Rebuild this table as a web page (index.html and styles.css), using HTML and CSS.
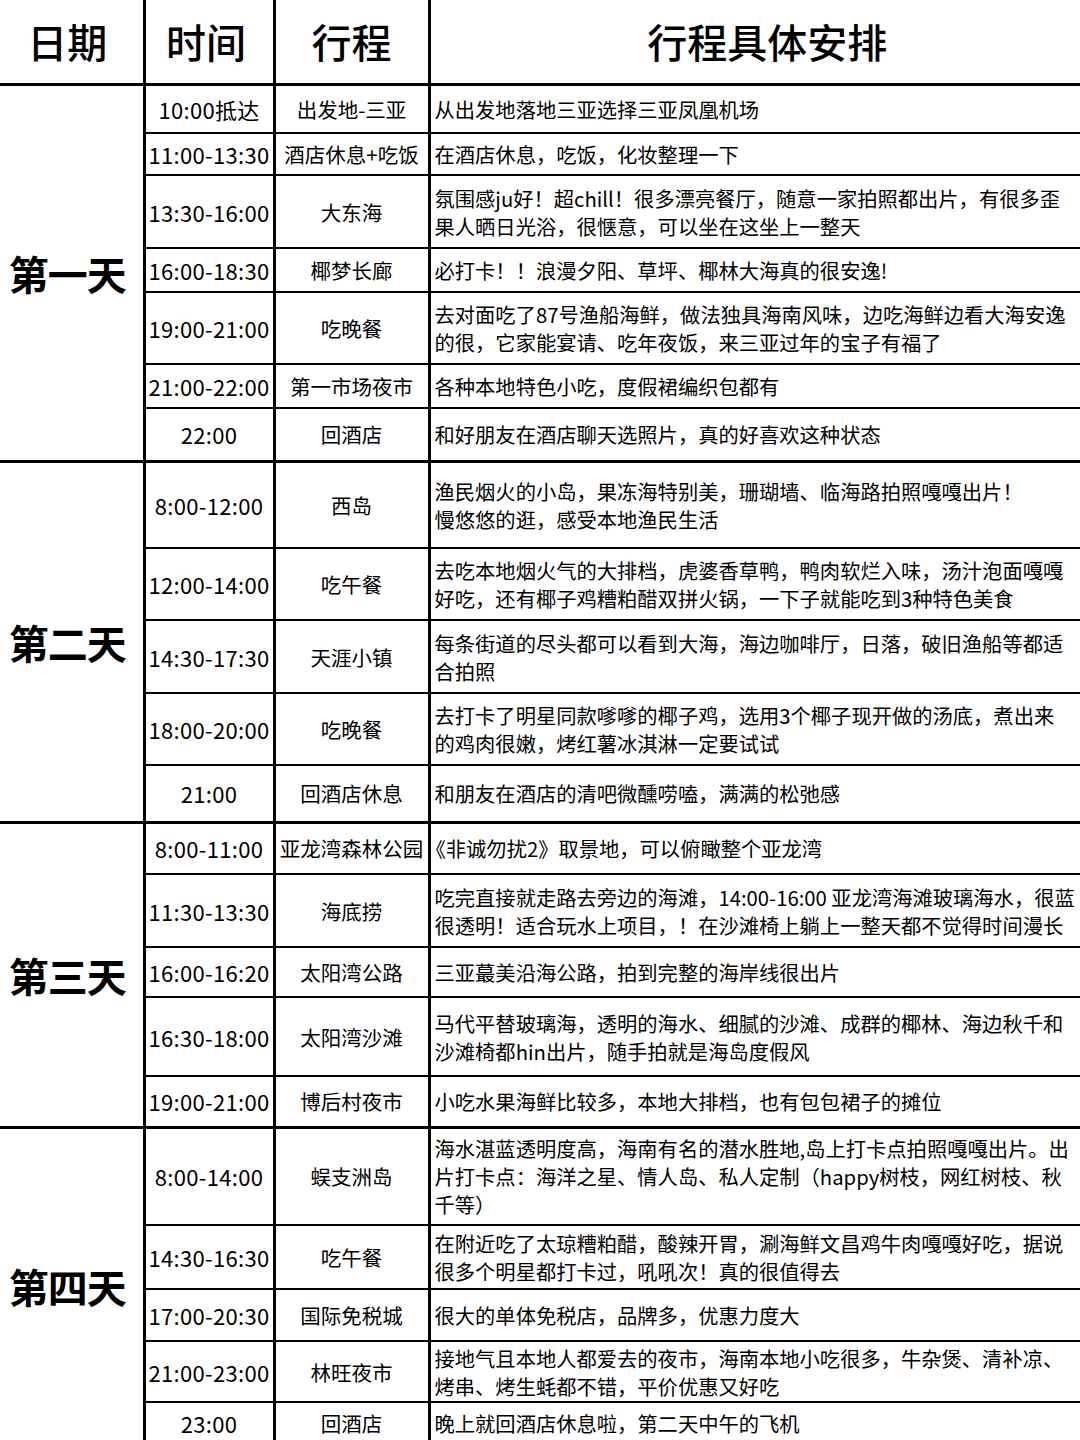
FILE: index.html
```html
<!DOCTYPE html>
<html lang="zh-CN">
<head>
<meta charset="utf-8">
<title>三亚行程</title>
<link rel="stylesheet" href="styles.css">
</head>
<body>
<table class="plan">
  <colgroup>
    <col class="c-day"><col class="c-time"><col class="c-place"><col class="c-desc">
  </colgroup>
  <thead>
    <tr class="head">
      <th class="h-day">日期</th><th class="h-time">时间</th><th>行程</th><th class="h-desc">行程具体安排</th>
    </tr>
  </thead>
  <tbody>
    <tr class="day-start h49">
      <td class="day" rowspan="7">第一天</td>
      <td class="time">10:00抵达</td><td class="place">出发地-三亚</td>
      <td class="desc">从出发地落地三亚选择三亚凤凰机场</td>
    </tr>
    <tr class="h42">
      <td class="time">11:00-13:30</td><td class="place">酒店休息+吃饭</td>
      <td class="desc">在酒店休息，吃饭，化妆整理一下</td>
    </tr>
    <tr class="h73">
      <td class="time">13:30-16:00</td><td class="place">大东海</td>
      <td class="desc">氛围感ju好！超chill！很多漂亮餐厅，随意一家拍照都出片，有很多歪<br>果人晒日光浴，很惬意，可以坐在这坐上一整天</td>
    </tr>
    <tr class="h44">
      <td class="time">16:00-18:30</td><td class="place">椰梦长廊</td>
      <td class="desc">必打卡！！浪漫夕阳、草坪、椰林大海真的很安逸!</td>
    </tr>
    <tr class="h72">
      <td class="time">19:00-21:00</td><td class="place">吃晚餐</td>
      <td class="desc">去对面吃了87号渔船海鲜，做法独具海南风味，边吃海鲜边看大海安逸<br>的很，它家能宴请、吃年夜饭，来三亚过年的宝子有福了</td>
    </tr>
    <tr class="h44">
      <td class="time">21:00-22:00</td><td class="place">第一市场夜市</td>
      <td class="desc">各种本地特色小吃，度假裙编织包都有</td>
    </tr>
    <tr class="h53">
      <td class="time">22:00</td><td class="place">回酒店</td>
      <td class="desc">和好朋友在酒店聊天选照片，真的好喜欢这种状态</td>
    </tr>

    <tr class="day-start h87">
      <td class="day" rowspan="5">第二天</td>
      <td class="time">8:00-12:00</td><td class="place">西岛</td>
      <td class="desc">渔民烟火的小岛，果冻海特别美，珊瑚墙、临海路拍照嘎嘎出片！<br>慢悠悠的逛，感受本地渔民生活</td>
    </tr>
    <tr class="h72">
      <td class="time">12:00-14:00</td><td class="place">吃午餐</td>
      <td class="desc">去吃本地烟火气的大排档，虎婆香草鸭，鸭肉软烂入味，汤汁泡面嘎嘎<br>好吃，还有椰子鸡糟粕醋双拼火锅，一下子就能吃到3种特色美食</td>
    </tr>
    <tr class="h73">
      <td class="time">14:30-17:30</td><td class="place">天涯小镇</td>
      <td class="desc">每条街道的尽头都可以看到大海，海边咖啡厅，日落，破旧渔船等都适<br>合拍照</td>
    </tr>
    <tr class="h72">
      <td class="time">18:00-20:00</td><td class="place">吃晚餐</td>
      <td class="desc">去打卡了明星同款嗲嗲的椰子鸡，选用3个椰子现开做的汤底，煮出来<br>的鸡肉很嫩，烤红薯冰淇淋一定要试试</td>
    </tr>
    <tr class="h57">
      <td class="time">21:00</td><td class="place">回酒店休息</td>
      <td class="desc">和朋友在酒店的清吧微醺唠嗑，满满的松弛感</td>
    </tr>

    <tr class="day-start h52">
      <td class="day" rowspan="5">第三天</td>
      <td class="time">8:00-11:00</td><td class="place">亚龙湾森林公园</td>
      <td class="desc desc-tight">《非诚勿扰2》取景地，可以俯瞰整个亚龙湾</td>
    </tr>
    <tr class="h73">
      <td class="time">11:30-13:30</td><td class="place">海底捞</td>
      <td class="desc">吃完直接就走路去旁边的海滩，14:00-16:00 亚龙湾海滩玻璃海水，很蓝<br>很透明！适合玩水上项目，！在沙滩椅上躺上一整天都不觉得时间漫长</td>
    </tr>
    <tr class="h50">
      <td class="time">16:00-16:20</td><td class="place">太阳湾公路</td>
      <td class="desc">三亚蕞美沿海公路，拍到完整的海岸线很出片</td>
    </tr>
    <tr class="h79">
      <td class="time">16:30-18:00</td><td class="place">太阳湾沙滩</td>
      <td class="desc">马代平替玻璃海，透明的海水、细腻的沙滩、成群的椰林、海边秋千和<br>沙滩椅都hin出片，随手拍就是海岛度假风</td>
    </tr>
    <tr class="h51">
      <td class="time">19:00-21:00</td><td class="place">博后村夜市</td>
      <td class="desc">小吃水果海鲜比较多，本地大排档，也有包包裙子的摊位</td>
    </tr>

    <tr class="day-start h98">
      <td class="day" rowspan="5">第四天</td>
      <td class="time">8:00-14:00</td><td class="place">蜈支洲岛</td>
      <td class="desc">海水湛蓝透明度高，海南有名的潜水胜地,岛上打卡点拍照嘎嘎出片。出<br>片打卡点：海洋之星、情人岛、私人定制（happy树枝，网红树枝、秋<br>千等）</td>
    </tr>
    <tr class="h64">
      <td class="time">14:30-16:30</td><td class="place">吃午餐</td>
      <td class="desc">在附近吃了太琼糟粕醋，酸辣开胃，涮海鲜文昌鸡牛肉嘎嘎好吃，据说<br>很多个明星都打卡过，吼吼次！真的很值得去</td>
    </tr>
    <tr class="h52">
      <td class="time">17:00-20:30</td><td class="place">国际免税城</td>
      <td class="desc">很大的单体免税店，品牌多，优惠力度大</td>
    </tr>
    <tr class="h61">
      <td class="time">21:00-23:00</td><td class="place">林旺夜市</td>
      <td class="desc">接地气且本地人都爱去的夜市，海南本地小吃很多，牛杂煲、清补凉、<br>烤串、烤生蚝都不错，平价优惠又好吃</td>
    </tr>
    <tr class="h42">
      <td class="time">23:00</td><td class="place">回酒店</td>
      <td class="desc">晚上就回酒店休息啦，第二天中午的飞机</td>
    </tr>
  </tbody>
</table>
</body>
</html>
```

FILE: styles.css
```css
html, body {
  margin: 0;
  padding: 0;
  background: #fff;
}
body {
  font-family: "Noto Sans CJK SC", "Noto Sans", sans-serif;
  color: #000;
  overflow: hidden;
}
.plan {
  width: 1080px;
  table-layout: fixed;
  border-collapse: collapse;
}
.c-day { width: 144px; }
.c-time { width: 130px; }
.c-place { width: 155px; }
.c-desc { width: 651px; }

.plan th, .plan td {
  padding: 0;
  border-top: 2px solid #000;
  border-bottom: 2px solid #000;
  border-left: 3px solid #000;
  border-right: 3px solid #000;
  vertical-align: middle;
}
.plan th:first-child, .plan td.day { border-left: none; }
.plan th:last-child, .plan td.desc { border-right: none; }

.head { height: 84px; }
.head th {
  border-top: none;
  border-bottom: 3px solid #000;
  font-size: 40px;
  font-weight: 500;
  text-align: center;
}
.head th.h-day { padding-right: 8px; }
.head th.h-time { padding-right: 6px; }
.head th.h-desc { padding-left: 24px; }
.day-start td { border-top: 3px solid #000; }

.day {
  font-size: 40px;
  font-weight: 700;
  text-align: center;
  letter-spacing: -1px;
  padding-right: 8px !important;
}
.time {
  font-size: 22px;
  text-align: center;
  white-space: nowrap;
  letter-spacing: 0.3px;
}
.place {
  font-size: 20.5px;
  text-align: center;
  white-space: nowrap;
}
.desc {
  font-size: 20.3px;
  line-height: 28px;
  text-align: left;
  padding-left: 4px !important;
  white-space: nowrap;
}
.desc-tight { text-indent: -9px; }

.h42 { height: 42px; }
.h44 { height: 44px; }
.h49 { height: 49px; }
.h50 { height: 50px; }
.h51 { height: 51px; }
.h52 { height: 52px; }
.h53 { height: 53px; }
.h57 { height: 57px; }
.h61 { height: 61px; }
.h64 { height: 64px; }
.h72 { height: 72px; }
.h73 { height: 73px; }
.h79 { height: 79px; }
.h87 { height: 87px; }
.h98 { height: 98px; }
```
